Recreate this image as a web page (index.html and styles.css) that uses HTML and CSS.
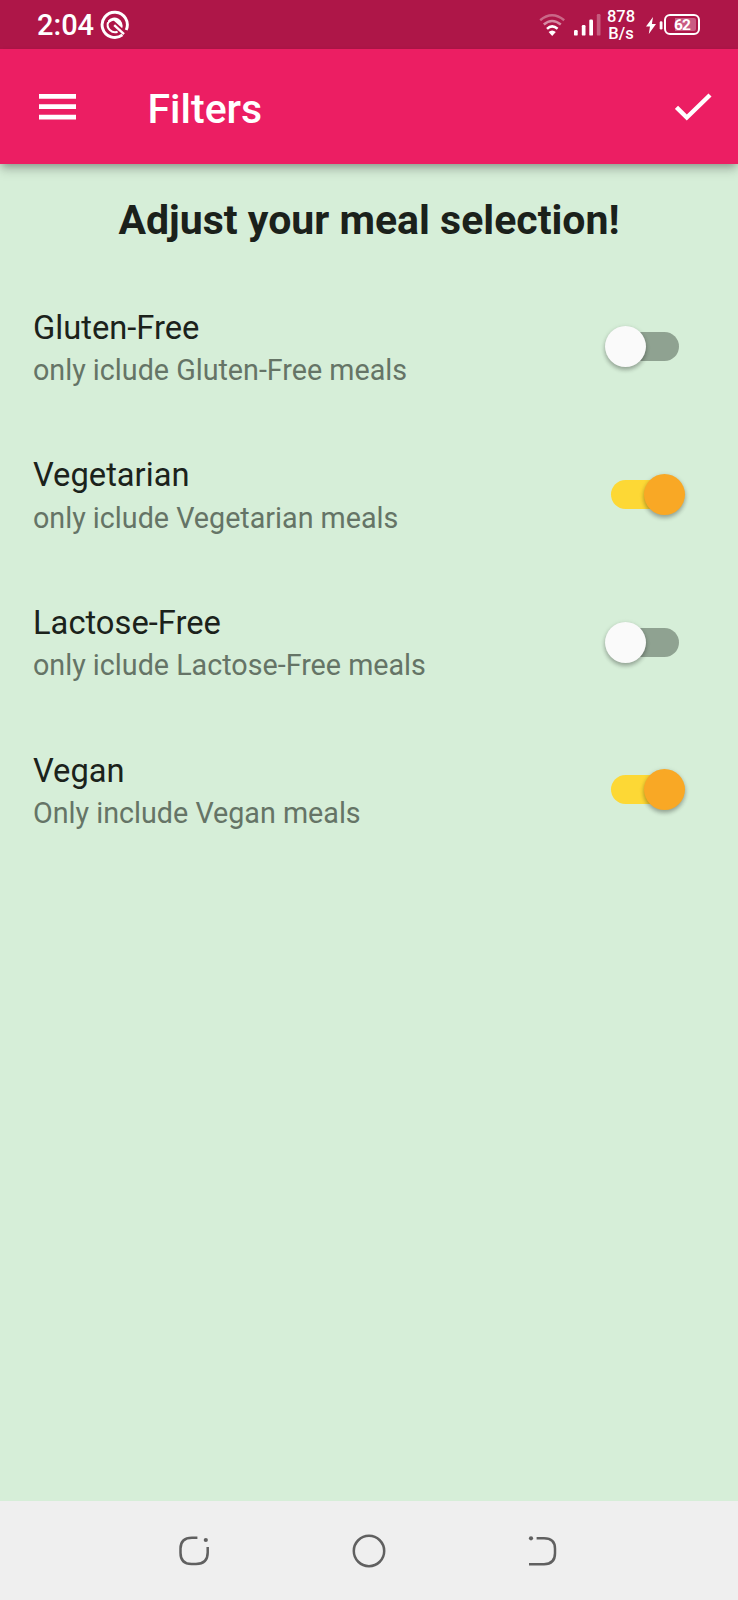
FILE: index.html
```html
<!DOCTYPE html>
<html lang="en">
<head>
<meta charset="utf-8">
<title>Filters</title>
<link rel="stylesheet" href="styles.css">
</head>
<body>
<div class="screen">
  <header class="status">
    <span class="time">2:04</span>
    <svg class="status-logo" width="30" height="30" viewBox="0 0 30 30" fill="none" stroke="#fff">
      <path d="M22.4 24.8A12.6 12.6 0 1 1 26.2 20" stroke-width="2.9"/>
      <path d="M8 12.2A7.6 7.6 0 0 0 17.6 21.8" stroke-width="2"/>
      <path d="M8 10.6A8.2 8.2 0 0 1 22.2 18.2L14.2 11Q12.5 10.2 8 14Z" fill="#fff" stroke="none"/>
      <path d="M14.2 15.2L24 24.2" stroke-width="2.4"/>
    </svg>
    <svg class="wifi" width="27" height="24" viewBox="0 0 27 24" fill="none" stroke="#fff" stroke-width="2.5">
      <path d="M1.2 7.2Q13 -2.6 25.2 7.2" opacity=".35"/>
      <path d="M4.8 11.5Q13 4.4 21.8 11.5" opacity=".5"/>
      <path d="M8 15.8Q13 11 18.6 15.8"/>
      <path d="M9.6 19Q13.2 15.9 16.8 19L13.2 23Z" fill="#fff" stroke="none"/>
    </svg>
    <svg class="signal" width="27" height="22" viewBox="0 0 27 22" fill="#fff">
      <rect x="0" y="16" width="3.7" height="5.6" rx="1.2"/>
      <rect x="7.8" y="11" width="3.7" height="10.6" rx="1.2"/>
      <rect x="15.3" y="5.6" width="3.7" height="16" rx="1.2"/>
      <rect x="22.8" y="0" width="3.7" height="21.6" rx="1.2" opacity=".3"/>
    </svg>
    <span class="speed"><span>878</span><span>B/s</span></span>
    <svg class="bolt" width="18" height="18" viewBox="0 0 18 18" fill="#fff">
      <path d="M7 0L0 9.5H4L2.8 17L10 7H5.9Z"/>
      <rect x="13.7" y="4.2" width="2.8" height="8.4" rx="1.3"/>
    </svg>
    <span class="battery"><span>62</span></span>
  </header>
  <div class="appbar">
    <svg class="menu" width="38" height="26" viewBox="0 0 38 26" fill="#fff">
      <path d="M0 0H37V4.7H0ZM0 10.3H37V15H0ZM0 20.7H37V25.4H0Z"/>
    </svg>
    <h1 class="title">Filters</h1>
    <svg class="check" width="38" height="30" viewBox="0 0 38 30" fill="none" stroke="#fff" stroke-width="4.4">
      <path d="M1.5 15.3L11.8 25.5L35 3"/>
    </svg>
  </div>
  <main class="content">
    <h2 class="heading">Adjust your meal selection!</h2>
    <div class="row">
      <div class="labels"><div class="name">Gluten-Free</div><div class="desc">only iclude Gluten-Free meals</div></div>
      <div class="switch"><span class="thumb"></span></div>
    </div>
    <div class="row">
      <div class="labels"><div class="name">Vegetarian</div><div class="desc">only iclude Vegetarian meals</div></div>
      <div class="switch on"><span class="thumb"></span></div>
    </div>
    <div class="row">
      <div class="labels"><div class="name">Lactose-Free</div><div class="desc">only iclude Lactose-Free meals</div></div>
      <div class="switch"><span class="thumb"></span></div>
    </div>
    <div class="row">
      <div class="labels"><div class="name">Vegan</div><div class="desc">Only include Vegan meals</div></div>
      <div class="switch on"><span class="thumb"></span></div>
    </div>
  </main>
  <nav class="navbar">
    <svg class="recent" width="32" height="32" viewBox="0 0 32 32" fill="none" stroke="#606060" stroke-width="2.5">
      <path d="M19.4 2.7H14Q2.5 2.7 2.5 13.5V18Q2.5 29 13.5 29H18Q29.7 29 29.7 17.5V12"/>
      <circle cx="27.8" cy="5" r="2.1" fill="#606060" stroke="none"/>
    </svg>
    <svg class="home" width="34" height="34" viewBox="0 0 34 34" fill="none" stroke="#606060" stroke-width="2.5">
      <circle cx="17" cy="17" r="15.2"/>
    </svg>
    <svg class="back" width="30" height="32" viewBox="0 0 30 32" fill="none" stroke="#606060" stroke-width="2.5">
      <path d="M8.6 3.3H16Q27 3.3 27 13.8V18.3Q27 29.2 16 29.2H1"/>
      <circle cx="3" cy="3.3" r="2.1" fill="#606060" stroke="none"/>
    </svg>
  </nav>
</div>
</body>
</html>
```
FILE: styles.css
```css
* { box-sizing: border-box; }
body { margin: 0; font-family: Roboto, sans-serif; }
svg { display: block; flex: none; }
.screen {
  width: 738px;
  height: 1600px;
  display: flex;
  flex-direction: column;
  background: #d6eed8;
  overflow: hidden;
}
.status {
  height: 49px;
  flex: none;
  display: flex;
  align-items: flex-start;
  background: #ae1648;
  color: #fff;
}
.time {
  width: 63px;
  margin: 8px 0 0 37px;
  font-size: 29px;
  line-height: 35px;
  font-weight: 500;
  white-space: nowrap;
}
.status-logo { margin-top: 9.5px; }
.wifi { margin: 13px 0 0 409px; }
.signal { margin: 14px 0 0 8px; }
.speed {
  width: 32px;
  margin: 9px 0 0 4px;
  display: flex;
  flex-direction: column;
  align-items: center;
  font-size: 16.5px;
  line-height: 16.5px;
  font-weight: 500;
}
.bolt { margin: 17px 0 0 9px; }
.battery {
  width: 36px;
  height: 21px;
  margin: 14px 0 0 0;
  padding: 2px 2px 0;
  border: 2px solid #fff;
  border-radius: 6px;
  font-size: 15.5px;
  line-height: 14px;
  font-weight: 700;
  letter-spacing: -.8px;
  text-align: center;
}
.battery span { display: block; height: 13px; border-radius: 2px; background: linear-gradient(90deg, transparent 25%, #c95c83 25%); }
.appbar {
  height: 115px;
  flex: none;
  display: flex;
  align-items: center;
  padding: 0 25px 0 39px;
  background: #ec1e63;
  color: #fff;
  box-shadow: 0 4px 8px -2px rgba(0,0,0,.3), 0 8px 10px rgba(0,0,0,.1);
}
.title {
  flex: 1;
  margin: 4px 0 0 70.5px;
  font-size: 41px;
  line-height: 48px;
  font-weight: 500;
}
.content { flex: 1; padding-top: 32px; }
.heading {
  height: 77px;
  margin: 0;
  font-size: 41px;
  line-height: 48px;
  font-weight: 700;
  text-align: center;
  color: #1b211b;
}
.row {
  height: 147.7px;
  display: flex;
  align-items: center;
  justify-content: space-between;
  padding: 0 59.5px 0 33px;
}
.labels { padding-top: 2px; }
.name { font-size: 32.7px; line-height: 39px; color: #1b221b; }
.desc { margin-top: 5.5px; font-size: 28.7px; line-height: 34px; color: #657466; }
.switch {
  width: 68px;
  height: 29px;
  border-radius: 15px;
  background: #8fa291;
  display: flex;
  align-items: center;
}
.switch.on { background: #fdd835; justify-content: flex-end; }
.thumb {
  flex: none;
  width: 41px;
  height: 41px;
  margin: 0 -6px;
  border-radius: 50%;
  background: #fafafa;
  box-shadow: 0 3px 4px rgba(0,0,0,.24), 0 1px 5px rgba(0,0,0,.13);
}
.on .thumb { background: #f9a825; }
.navbar {
  height: 99px;
  flex: none;
  display: flex;
  background: #efefef;
}
.recent { margin: 34px 0 0 178px; }
.home { margin: 32.5px 0 0 142px; }
.back { margin: 34px 0 0 142px; }
```
